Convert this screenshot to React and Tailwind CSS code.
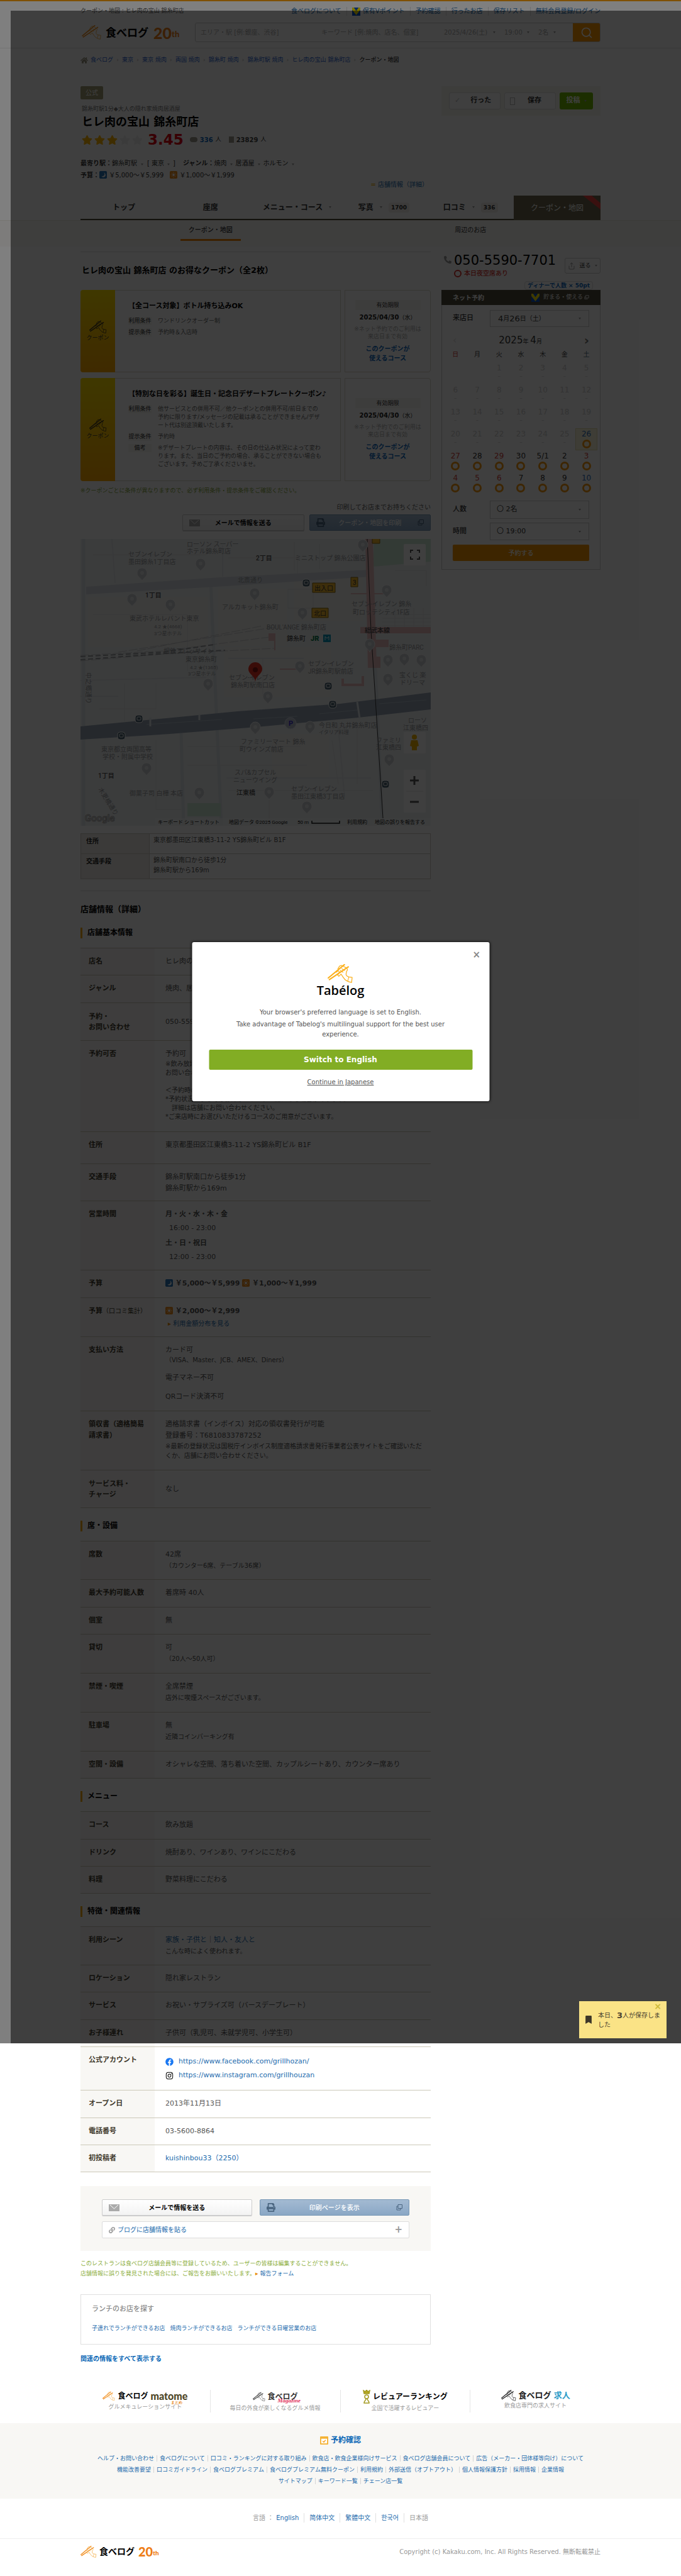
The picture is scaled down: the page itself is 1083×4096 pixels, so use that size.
import React from "react";
import { FaFacebook, FaInstagram, FaPhoneAlt, FaHome, FaBookmark, FaLink, FaPrint, FaStar } from "react-icons/fa";
import { FiSearch, FiShare } from "react-icons/fi";

const FONT = "font-['DejaVu_Sans','Noto_Sans_CJK_JP',sans-serif]";
const LINK = "text-[#1c6bad]";

function Hand({ className, stick = "#f08c1e", line = "#f4b04c" }) {
  return (
    <svg viewBox="0 0 46 34" className={className} fill="none" aria-hidden="true">
      <path d="M1 25 30 1M3 28 37 5" stroke={stick} strokeWidth="2.4" strokeLinecap="round" />
      <path d="m18 9 3-5c2-2 5-2 7 0l6 3c2 2 2 4 0 6l-1 5c0 3 2 4 5 5l6 1-1 9c-7-1-12-4-15-9l-4-6-4 4-2-2 3-6-2-2-4 3" stroke={line} strokeWidth="1.4" strokeLinejoin="round" />
      <path d="m38 23-2 8M22 11l6 4M25 8l6 4" stroke={line} strokeWidth="1.2" />
    </svg>
  );
}

function Logo({ small }) {
  return (
    <a href="#" className="flex items-center text-black" aria-label="食べログ">
      <Hand className={small ? "h-[19px] w-[26px]" : "h-[23px] w-[36px]"} />
      <span className={small ? "ml-1 text-[14px] font-bold leading-5" : "ml-1 text-[17px] font-bold leading-6"}>食べログ</span>
      <span className={small ? "ml-1.5 flex items-end font-['Lato'] font-black leading-5 text-[#ee7d16]" : "ml-2 flex items-end font-['Lato'] font-black leading-6 text-[#ee7d16]"}>
        <span className={small ? "text-[20px]" : "text-[25px]"}>20</span>
        <span className={small ? "text-[10px] leading-4" : "text-[13px] leading-5"}>th</span>
      </span>
    </a>
  );
}

function Caret() {
  return <span className="inline-block border-x-2 border-t-3 border-x-transparent border-t-[#999]" />;
}

function VMark() {
  return (
    <svg viewBox="0 0 14 14" className="size-[13px] shrink-0" aria-hidden="true">
      <path d="M0 0h14v14H0z" fill="#0a52c8" />
      <path d="M0 0h3l4 6 4-6h3v4l-7 9-7-9z" fill="#ffe900" />
    </svg>
  );
}

function Moon() {
  return (
    <svg viewBox="0 0 14 14" className="inline-block size-3 align-[-2px]" aria-hidden="true">
      <rect width="14" height="14" rx="2" fill="#2a77b8" />
      <path d="M8 2.5c3 2 2 7-4 7.500 3 3 8 1 7.500-3C11.200 4.500 10 3 8 2.500z" fill="#fff" />
    </svg>
  );
}

function Sun() {
  return (
    <svg viewBox="0 0 14 14" className="inline-block size-3 align-[-2px]" aria-hidden="true">
      <rect width="14" height="14" rx="2" fill="#ec8c1e" />
      <circle cx="7" cy="7" r="2.200" fill="#fff" />
      <path d="M7 2v1.500M7 10.500V12M2 7h1.500M10.500 7H12M3.500 3.500l1 1M9.500 9.500l1 1M3.500 10.500l1-1M9.500 4.500l1-1" stroke="#fff" />
    </svg>
  );
}

const Wrap = ({ className = "", children }) => <div className={"mx-auto w-full max-w-[827px] " + className}>{children}</div>;

function Header() {
  const nav = ["予約確認", "行ったお店", "保存リスト", "無料会員登録/ログイン"];
  return (
    <header className="border-t-2 border-b border-t-[#ffa000] border-b-[#e6e6e6] pb-[9px]">
      <Wrap>
        <div className="mt-[9px] flex h-3.5 items-center justify-between">
          <p className="text-[9px] text-[#555]">クーポン・地図 : ヒレ肉の宝山 錦糸町店</p>
          <nav className={"ml-auto flex shrink-0 items-center text-[10px] leading-3.5 " + LINK}>
            <a href="#" className="pr-2">食べログについて</a>
            <a href="#" className="flex items-center gap-1 border-l border-[#ddd] px-2"><VMark />保有Vポイント</a>
            {nav.map((t, i) => (
              <a key={t} href="#" className={i === 3 ? "border-l border-[#ddd] pl-2" : "border-l border-[#ddd] px-2"}>{t}</a>
            ))}
          </nav>
        </div>
        <div className="mt-[11px] flex h-[31px] items-center justify-between">
          <Logo />
          <form className="flex h-full w-[645px] items-stretch overflow-hidden rounded-[3px] border border-[#ccc] text-[10px] text-[#aaa]">
            <input aria-label="エリア・駅" placeholder="エリア・駅 [例:銀座、渋谷]" className="w-[192px] px-2 placeholder:text-[#aaa]" />
            <input aria-label="キーワード" placeholder="キーワード [例:焼肉、店名、個室]" className="w-[195px] px-2 placeholder:text-[#aaa]" />
            <span className="flex flex-1 items-center gap-1 pl-2">
              <select aria-label="日付" className="w-[74px] appearance-none"><option>2025/4/26(土)</option></select><Caret />
              <select aria-label="時刻" className="ml-2.5 w-[32px] appearance-none"><option>19:00</option></select><Caret />
              <select aria-label="人数検索" className="ml-2.5 w-[20px] appearance-none"><option>2名</option></select><Caret />
            </span>
            <button type="button" aria-label="検索" className="flex w-[43px] items-center justify-center bg-[#f90] text-white"><FiSearch className="size-5" /></button>
          </form>
        </div>
      </Wrap>
    </header>
  );
}

function Breadcrumb() {
  const items = ["食べログ", "東京", "東京 焼肉", "両国 焼肉", "錦糸町 焼肉", "錦糸町駅 焼肉", "ヒレ肉の宝山 錦糸町店"];
  return (
    <Wrap className="mt-3 flex h-3.5 items-center text-[9px] text-[#333]">
      <FaHome className="mr-1 size-3 text-[#999580]" />
      {items.map((t) => (
        <span key={t} className="flex items-center">
          <a href="#" className="text-[#1f5fd0]">{t}</a>
          <span className="w-3.5 text-center text-[#aaa]">›</span>
        </span>
      ))}
      <span className="font-medium">クーポン・地図</span>
    </Wrap>
  );
}

function ShopHead() {
  return (
    <Wrap className="mt-[34px] flex justify-between">
      <div>
        <span className="inline-flex h-[21px] items-center rounded-[2px] bg-[#a39e74] px-2 text-[10px] text-white">公式</span>
        <p className="mt-2 h-3.5 pl-0.5 text-[9px] leading-3.5 text-[#777]">錦糸町駅1分◆大人の隠れ家焼肉居酒屋</p>
        <h1 className="h-7 pl-0.5 text-[18px] font-bold leading-7 text-black">ヒレ肉の宝山 錦糸町店</h1>
        <div className="flex h-7 items-center pl-0.5">
          <div className="flex gap-[3px] text-[#ffb400]">
            <FaStar className="size-[17px]" /><FaStar className="size-[17px]" /><FaStar className="size-[17px]" />
            <FaStar className="size-[17px] text-[#eee]" /><FaStar className="size-[17px] text-[#eee]" />
          </div>
          <b className="ml-2 text-[23px] leading-7 text-[#e00010]">3.45</b>
          <span className="ml-2.5 h-2 w-3 rounded-full bg-[#9c998c]" />
          <b className="ml-1 text-[10px] text-[#0b66bd]">336</b><span className="ml-1 text-[9px]">人</span>
          <span className="ml-3 h-2.5 w-2 bg-[#9c998c]" />
          <b className="ml-1 text-[10px] text-[#444]">23829</b><span className="ml-1 text-[9px]">人</span>
        </div>
        <div className="mt-3.5 text-[10px] leading-[19px] text-[#333]">
          <p className="flex items-center"><b>最寄り駅：</b>錦糸町駅<i className="w-4 text-center"><Caret /></i>[ 東京<i className="w-3.5 text-center"><Caret /></i>]<b className="ml-3">ジャンル：</b>焼肉<i className="w-3.5 text-center"><Caret /></i>居酒屋<i className="w-3.5 text-center"><Caret /></i>ホルモン<i className="w-3.5 text-center"><Caret /></i></p>
          <p><b>予算：</b><Moon /> ￥5,000～￥5,999　<Sun /> ￥1,000～￥1,999</p>
        </div>
        <p className="h-3 w-[557px] pr-1 text-right text-[10px] leading-3"><a href="#" className={LINK}><span className="text-[#e8a800]">=</span> 店舗情報（詳細）</a></p>
      </div>
      <div className="flex h-[47px] w-[253px] items-center gap-1.5 bg-[#f5f4ef] px-3 text-[11px] font-bold text-[#333]">
        <button className="flex h-[27px] w-[82px] items-center gap-4 rounded-[3px] border border-[#ddd] bg-white pl-2"><span className="text-[#bbb]">✓</span>行った</button>
        <button className="flex h-[27px] w-[82px] items-center gap-5 rounded-[3px] border border-[#ddd] bg-white pl-2"><span className="h-3 w-2 border border-[#bbb]" />保存</button>
        <button className="flex h-[27px] flex-1 items-center justify-center gap-1.5 rounded-[3px] bg-[#72b800] text-white">投稿 <Caret /></button>
      </div>
    </Wrap>
  );
}

function Tabs() {
  return (
    <>
      <Wrap className="mt-[11px]">
        <nav className="grid h-[39px] grid-cols-6 items-stretch text-[12px] font-bold text-[#333]">
          {[["トップ"], ["座席"], ["メニュー・コース"], ["写真", "1700"], ["口コミ", "336"]].map(([t, n]) => (
            <a key={t} href="#" className="flex items-center justify-center gap-2.5 border-b-2 border-[#4a4733]">
              {t}
              {t === "メニュー・コース" || n ? <Caret /> : null}
              {n ? <span className="rounded-sm bg-[#f1efea] px-1 text-[9px] leading-4">{n}</span> : null}
            </a>
          ))}
          <a href="#" className="relative flex items-center justify-center overflow-hidden bg-[#6c674c] font-normal text-white">
            クーポン・地図
            <svg viewBox="0 0 28 22" className="absolute right-0 top-0 h-[22px] w-7" aria-hidden="true"><path d="M0 0h14l14 12v10z" fill="#e8413c" /></svg>
          </a>
        </nav>
      </Wrap>
      <div className="border-t border-[#eceae3] bg-[#faf9f7]">
        <Wrap className="grid h-[41px] grid-cols-2 text-[10px] text-[#333]">
          <a href="#" className="mx-auto h-[32px] w-24 border-b-3 border-[#f08300] text-center font-medium leading-[30px]">クーポン・地図</a>
          <a href="#" className="text-center leading-[30px]">周辺のお店</a>
        </Wrap>
      </div>
    </>
  );
}

function Coupon({ title, rows, size }) {
  return (
    <article className={"flex " + size}>
      <div className="flex w-[55px] flex-col items-center justify-center rounded-l-sm bg-linear-to-b from-[#ffe000] to-[#ffa800] text-[9px] text-[#333]">
        <Hand className="h-[22px] w-[28px]" stick="#443a20" line="#443a20" />
        クーポン
      </div>
      <div className="flex-1 border border-l-0 border-[#d8d5c8] pl-[21px] pt-4">
        <h3 className="text-[11px] font-bold leading-[18px] text-black">{title}</h3>
        <dl className="mt-2 text-[9px] leading-[13px]">
          {rows.map(([k, lines]) => (
            <div key={k} className="mb-[5px] flex gap-2.5">
              <dt className="h-[13px] w-[37px] bg-[#f5f4f0] text-center text-[#333]">{k}</dt>
              <dd className="flex-1 text-[#666]">{lines.map((l) => <span key={l} className="block">{l}</span>)}</dd>
            </div>
          ))}
        </dl>
      </div>
      <div className="ml-1.5 flex w-[137px] flex-col items-center justify-center rounded-r-sm border border-[#d8d5c8] text-[9px]">
        <span className="w-[104px] bg-[#f7f6f2] text-center leading-4 text-[#333]">有効期限</span>
        <p className="mt-1 leading-4 text-[#222]"><b className="text-[10px]">2025/04/30</b>（水）</p>
        <p className="mt-1 text-center leading-3 text-[#aaa]">※ネット予約でのご利用は<br />来店日まで有効</p>
        <a href="#" className="mt-1.5 text-center text-[10px] font-bold leading-[15px] text-[#0b66bd]">このクーポンが<br />使えるコース</a>
      </div>
    </article>
  );
}

const mapLabels = [
  [169, 8, "ローソン スーパー"], [169, 19, "ホテル錦糸町店"], [76, 24, "セブンイレブン"], [76, 36, "墨田錦糸1丁目店"],
  [341, 30, "ミニストップ 錦糸公園店"], [250, 65, "北斎通り"], [225, 108, "アルカキット錦糸町"],
  [431, 103, "セブン-イレブン 錦糸"], [433, 116, "町ロッテシティ1F店"], [78, 126, "東武ホテルレバント東京"],
  [117, 138, "4.2 ★(4668)", 8], [117, 149, "3つ星ホテル", 8], [296, 140, "BOUL'ANGE 錦糸町店"],
  [132, 178, "相鉄フレッサイン"], [167, 191, "東京錦糸町"], [174, 203, "4.2 ★(1365)", 8], [171, 213, "3つ星ホテル", 8],
  [491, 172, "錦糸町PARC"], [362, 198, "セブン-イレブン"], [362, 210, "JR錦糸町駅前店"],
  [236, 220, "セブン-イレブン"], [239, 232, "錦糸町駅南口店"], [507, 216, "宝くじ 楽"], [508, 228, "ドリーマ"],
  [521, 288, "ローソ"], [513, 300, "江東橋四"], [379, 296, "今日和 丸井錦糸町店"], [379, 306, "イタリア料理", 8],
  [255, 322, "ファミリーマート 錦糸"], [253, 334, "町ウインズ前店"], [470, 320, "ファミリ"], [470, 331, "江東橋四"],
  [33, 334, "東京都立両国高等"], [35, 346, "学校・附属中学校"], [245, 371, "スパ&カプセル"], [243, 383, "ニューウイング"],
  [78, 404, "御菓子司 白樺 本店"], [335, 397, "セブン-イレブン"], [335, 409, "墨田江東橋3丁目店"],
];
const mapDark = [[279, 30, "2丁目"], [103, 89, "1丁目"], [28, 376, "1丁目"], [248, 403, "江東橋"], [452, 145, "総武本線"], [328, 158, "錦糸町"]];
const mapPins = [[98, 55], [191, 40], [82, 96], [143, 105], [277, 87], [353, 118], [487, 82], [449, 10], [460, 168], [349, 203], [203, 231], [298, 251], [489, 193], [515, 191], [542, 193], [489, 223], [278, 300], [365, 299], [105, 365], [491, 351], [189, 404], [300, 403], [360, 426]];
const mapStops = [[359, 70], [394, 234], [401, 263], [93, 286], [65, 313], [485, 390]];

function MapView() {
  return (
    <svg viewBox="0 0 557 456" role="img" aria-label="錦糸町駅周辺の地図" className="mt-[13px] block w-full font-['Roboto','Noto_Sans_CJK_JP',sans-serif]">
      <rect width="557" height="456" fill="#eff0f1" />
      <g fill="#f3f0ed"><path d="M12 92h190v80H12zM218 80h110v90H218zM228 172h170v80H228zM305 310h90v70H305zM340 60h110v70H340z" /></g>
      <g fill="none" stroke="#dfe4e8" strokeWidth="5"><path d="M5 0v456M207 67l17 389M160 308l4 148M460 0l20 456" /></g>
      <g fill="none" stroke="#e2e6e9" strokeWidth="2"><path d="M0 225l200-5M226 10v50M50 0l5 70M232 380h230M0 250h60M235 190h120M410 300l10 110" /></g>
      <g fill="none" stroke="#e0e3e5" strokeWidth="1"><path d="M20 25h180M20 120h150v90M70 230v60M30 270h90v-40M235 30h110v30M340 5v45M380 8v40M170 330h180M170 360h190M235 400h230M290 250v-60M300 410v40M120 320v110h40M440 300v90M400 320l10 70M480 120h77M480 126h77M480 132h77M480 138h77M500 110v30M515 110v30M530 110v30M545 110v30M330 80h40v30h-40zM500 50h50v25" /></g>
      <path d="M467 0h90v36l-92 8z" fill="#cfe8d6" /><path d="M170 420h53v21h-53z" fill="#cfe8d6" />
      <path d="M9 76 222 61l238-12v11L215 76 9 88z" fill="#d4dae0" />
      <g fill="none" stroke="#c8cbcd" strokeWidth="1"><path d="m0 185 132-7 176-23M0 194l132-11 176-9M60 180l250-40M90 178l200-40" strokeDasharray="14 3" /></g>
      <path d="m0 187 132-7 80-12M0 192l150-11 80-4" stroke="#9b9ea1" strokeWidth="2" strokeDasharray="8 4" fill="none" />
      <g fill="#e8bcbe"><path d="M453 0h12l6 203h-14zM445 140h112v10H445zM299 150h9v12h-9zM308 150h2v27h-2zM460 160h30v12h-30zM457 187h20v18h-20zM317 206h32v2h-32zM430 86h57v2h-57zM415 222h4v8h28v-12h4v16h-36z" /></g>
      <path d="m0 298 250-24 163-12 144-18v27l-115 13-162 15-138 11-142 9z" fill="#94a3b3" />
      <path d="m105 295 120-8M275 286l70-4M380 278l60-6M475 262l75-6" stroke="#b3bfca" fill="none" />
      <path d="M111 284v14M189 279v9M440 259l4 26" stroke="#dfe4e8" strokeWidth="3" />
      <path d="m456 0 6 146 6 93 13 205" fill="none" stroke="#333" strokeWidth="1" />
      {mapPins.map(([x, y]) => (
        <g key={x + "-" + y}><path d={`M${x} ${y + 12}c-1-5-8-6-8-13a8 8 0 0 1 16 0c0 7-7 8-8 13z`} fill="#c9cdd1" stroke="#f6f6f6" /><circle cx={x} cy={y - 1} r="3" fill="#e3e5e7" /></g>
      ))}
      <g fill="#989c9f">
        {mapLabels.map(([x, y, t, s]) => <text key={x + "-" + y} x={x} y={y + 4} fontSize={s || 10}>{t}</text>)}
        <text x="0" y="0" fontSize="10" transform="translate(9 212) rotate(90)">中之郷通り</text>
        <text x="0" y="0" fontSize="10" transform="translate(28 398) rotate(58)">木更橋通り</text>
      </g>
      <g fill="#4a4a4a">{mapDark.map(([x, y, t]) => <text key={x + "-" + y} x={x} y={y + 4} fontSize="10" fontWeight="500">{t}</text>)}</g>
      <text x="366" y="162" fontSize="11" fontWeight="900" fill="#0a7a4a">JR</text>
      <rect x="386" y="152" width="12" height="12" fill="#0097b8" /><path d="M389 161v-6l3 3 3-3v6" stroke="#fff" fill="none" />
      {mapStops.map(([x, y]) => (
        <g key={x + "-" + y}><rect x={x - 6} y={y - 6} width="12" height="12" rx="4" fill="#4a6272" stroke="#fff" /><rect x={x - 3} y={y - 3} width="6" height="5" rx="1" fill="none" stroke="#fff" /></g>
      ))}
      <g stroke="#8a6a10" fill="#f5b92c"><path d="M369 70h36v15h-36zM368 110h26v15h-26zM430 61h11v15h-11zM464-1h12v8h-12z" /></g>
      <g fill="#333" fontSize="10"><text x="372" y="82">出入口</text><text x="371" y="122">北口</text><text x="433" y="73">3</text></g>
      <circle cx="334" cy="293" r="9" fill="#b4bcc8" stroke="#dde" /><text x="331" y="297" fontSize="11" fontWeight="700" fill="#3a2ad0">P</text>
      <path d="M278 227c-1-10-11-12-11-20a11 11 0 0 1 22 0c0 8-10 10-11 20z" fill="#ea3323" /><circle cx="278" cy="208" r="4" fill="#8a1610" />
      <g fill="#fff"><rect x="514" y="8" width="35" height="34" rx="2" /><rect x="514" y="307" width="35" height="34" rx="2" /><rect x="514" y="367" width="35" height="68" rx="2" /></g>
      <path d="M525 22v-4h4M535 18h4v4M539 28v4h-4M529 32h-4v-4" stroke="#555" strokeWidth="2" fill="none" />
      <circle cx="531" cy="315" r="4" fill="#f5b400" /><path d="M526 320h10l2 9-3 1v6h-8v-6l-3-1z" fill="#f5b400" />
      <path d="M524 384h14M531 377v14M524 418h14" stroke="#555" strokeWidth="3" /><path d="M518 401h27" stroke="#e0e0e0" />
      <text x="7" y="449" fontSize="15" fontWeight="500" fill="#f8f8f8" stroke="#aaa" strokeWidth="1">Google</text>
      <rect x="119" y="444" width="438" height="12" fill="#f5f5f5" opacity="0.7" />
      <g fill="#111" fontSize="8"><text x="123" y="453">キーボード ショートカット</text><text x="236" y="453">地図データ ©2025 Google</text><text x="345" y="453">50 m</text><text x="424" y="453">利用規約</text><text x="468" y="453">地図の誤りを報告する</text></g>
      <path d="M368 448v4h44v-4" stroke="#111" fill="none" strokeWidth="1.500" />
    </svg>
  );
}

function ActionButtons({ print }) {
  return (
    <>
      <button className="relative flex h-[26px] flex-1 items-center justify-center rounded-[2px] border border-[#ccc] bg-linear-to-b from-white to-[#f3f3f3] text-[10px] font-bold text-black shadow-[0_1px_0_#ccc]">
        <svg viewBox="0 0 17 11" className="absolute left-2.5 h-[11px] w-[17px]" aria-hidden="true"><path d="M0 0h17v11H0z" fill="#aaa" /><path d="m2 1 6.500 6L15 1" stroke="#fff" fill="none" /></svg>
        メールで情報を送る
      </button>
      <button className="relative flex h-[26px] flex-1 items-center justify-center rounded-[2px] border border-[#7797b5] bg-linear-to-b from-[#a3bad2] to-[#8aa7c5] text-[10px] font-medium text-white">
        <FaPrint className="absolute left-2.5 size-3.5 text-[#4a6580]" />
        {print}
        <svg viewBox="0 0 10 10" className="absolute right-2.5 size-2.5" fill="none" stroke="#4a6580" aria-hidden="true"><path d="M3 .5h6.500v6H3zM3 3H1v6h6V7" /></svg>
      </button>
    </>
  );
}

const Sub = ({ children, className = "" }) => <span className={"block text-[10px] " + className}>{children}</span>;
const A = ({ children }) => <a href="#" className={LINK}>{children}</a>;

const sections = [
  ["店舗基本情報", [
    ["h-[43px]", "店名", "ヒレ肉の宝山 錦糸町店"],
    ["h-[44px]", "ジャンル", "焼肉、居酒屋、ホルモン"],
    ["h-[60px]", <>予約・<br />お問い合わせ</>, "050-5590-7701", true],
    ["h-[145px]", "予約可否", <>予約可<Sub className="leading-3.5">※飲み放題付きコースのご予約は、前日までに店舗へ直接<br />お問い合わせください。<br /><br />＜予約時のご注意＞<br />*予約状況によってはお席がカウンター席になる場合があります。<br />　詳細は店舗にお問い合わせください。<br />*ご来店時にお選びいただけるコースのご用意がございます。</Sub></>],
    ["h-[51px]", "住所", "東京都墨田区江東橋3-11-2 YS錦糸町ビル B1F"],
    ["h-[59px]", "交通手段", <>錦糸町駅南口から徒歩1分<br />錦糸町駅から169m</>],
    ["h-[110px]", "営業時間", <><b className="block">月・火・水・木・金</b><span className="mt-1 block pl-1.5">16:00 - 23:00</span><b className="mt-1.5 block">土・日・祝日</b><span className="mt-1 block pl-1.5">12:00 - 23:00</span></>],
    ["h-[44px]", "予算", <b><Moon /> ￥5,000～￥5,999 <Sun /> ￥1,000～￥1,999</b>],
    ["h-[62px]", <>予算<span className="font-normal text-[10px]">（口コミ集計）</span></>, <><b><Sun /> ￥2,000～￥2,999</b><Sub className="mt-0.5 pl-1"><span className="text-[#e88a00]">▸</span> <A>利用金額分布を見る</A></Sub></>],
    ["h-[118px]", "支払い方法", <>カード可<Sub className="leading-3.5">（VISA、Master、JCB、AMEX、Diners）</Sub><span className="mt-3 block">電子マネー不可</span><span className="mt-3 block">QRコード決済不可</span></>],
    ["h-[94px]", <>領収書（適格簡易<br />請求書）</>, <>適格請求書（インボイス）対応の領収書発行が可能<br />登録番号：T6810833787252<Sub className="leading-[15px]">※最新の登録状況は国税庁インボイス制度適格請求書発行事業者公表サイトをご確認いただ<br />くか、店舗にお問い合わせください。</Sub></>],
    ["h-[60px]", <>サービス料・<br />チャージ</>, "なし", true],
  ]],
  ["席・設備", [
    ["h-[61px]", "席数", <>42席<Sub>（カウンター6席、テーブル36席）</Sub></>],
    ["h-[44px]", "最大予約可能人数", "着席時 40人"],
    ["h-[43px]", "個室", "無"],
    ["h-[62px]", "貸切", <>可<Sub>（20人～50人可）</Sub></>],
    ["h-[62px]", "禁煙・喫煙", <>全席禁煙<Sub>店外に喫煙スペースがございます。</Sub></>],
    ["h-[62px]", "駐車場", <>無<Sub>近隣コインパーキング有</Sub></>],
    ["h-[43px]", "空間・設備", "オシャレな空間、落ち着いた空間、カップルシートあり、カウンター席あり"],
  ]],
  ["メニュー", [
    ["h-[44px]", "コース", "飲み放題"],
    ["h-[43px]", "ドリンク", "焼酎あり、ワインあり、ワインにこだわる"],
    ["h-[43px]", "料理", "野菜料理にこだわる"],
  ]],
  ["特徴・関連情報", [
    ["h-[61px]", "利用シーン", <><A>家族・子供と</A>｜<A>知人・友人と</A><Sub>こんな時によく使われます。</Sub></>],
    ["h-[43px]", "ロケーション", "隠れ家レストラン"],
    ["h-[44px]", "サービス", "お祝い・サプライズ可（バースデープレート）"],
    ["h-[43px]", "お子様連れ", "子供可（乳児可、未就学児可、小学生可）"],
    ["h-[69px]", "公式アカウント", <><span className="mt-0.5 flex items-center gap-2"><FaFacebook className="size-[13px] text-[#1877f2]" /><A>https://www.facebook.com/grillhozan/</A></span><span className="mt-1 flex items-center gap-2"><FaInstagram className="size-[13px] text-black" /><A>https://www.instagram.com/grillhouzan</A></span></>],
    ["h-[44px]", "オープン日", "2013年11月13日"],
    ["h-[43px]", "電話番号", "03-5600-8864"],
    ["h-[43px]", "初投稿者", <A>kuishinbou33（2250）</A>],
  ]],
];

function DetailSection({ title, rows }) {
  return (
    <section>
      <div className="h-[52px] pt-[20px]"><h3 className="h-[17px] border-l-3 border-[#f5a800] pl-2 text-[12px] font-bold leading-[17px] text-black">{title}</h3></div>
      <table className="w-full border-separate border-spacing-0 border-t border-[#ccc9b8] text-[11px] leading-[18px] text-[#555]">
        <tbody>
          {rows.map(([h, k, v, mid], i) => (
            <tr key={i} className={h}>
              <th className={"w-[118px] border-b border-[#ccc9b8] bg-[#f8f7f4] bg-clip-padding pl-[13px] pr-1 text-left font-bold text-[#40392c] " + (mid ? "align-middle leading-[17px]" : "pt-3 align-top")}>{k}</th>
              <td className={"border-b border-[#ccc9b8] pl-[17px] pr-1 " + (mid ? "align-middle" : "pt-3 align-top")}>{v}</td>
            </tr>
          ))}
        </tbody>
      </table>
    </section>
  );
}

function MainColumn() {
  return (
    <div className="min-w-0 flex-1 border-t border-[#ddd]">
      <h2 className="mt-5 pl-0.5 text-[13px] font-bold leading-[18px] text-black">ヒレ肉の宝山 錦糸町店 のお得なクーポン（全2枚）</h2>
      <div className="mt-[22px] flex flex-col gap-[9px]">
        <Coupon size="min-h-[131px]" title="【全コース対象】ボトル持ち込みOK" rows={[["利用条件", ["ワンドリンクオーダー制"]], ["提示条件", ["予約時＆入店時"]]]} />
        <Coupon size="min-h-[164px]" title="【特別な日を彩る】誕生日・記念日デザートプレートクーポン♪" rows={[
          ["利用条件", ["他サービスとの併用不可／他クーポンとの併用不可/前日までの", "予約に限ります/メッセージの記載は承ることができません/デザ", "ート代は別途頂戴いたします。"]],
          ["提示条件", ["予約時"]],
          ["備考", ["※デザートプレートの内容は、その日の仕込み状況によって変わ", "ります。また、当日のご予約の場合、承ることができない場合も", "ございます。予めご了承くださいませ。"]],
        ]} />
      </div>
      <p className="mt-2 text-[9px] leading-3.5 text-[#84a63c]">※クーポンごとに条件が異なりますので、必ず利用条件・提示条件をご確認ください。</p>
      <p className="mt-[13px] text-right text-[10px] leading-3.5 text-[#666]">印刷してお店までお持ちください</p>
      <div className="ml-auto mt-1 flex w-[395px] gap-2"><ActionButtons print="クーポン・地図を印刷" /></div>
      <MapView />
      <table className="mt-3 w-full border-separate border-spacing-0 border-l border-t border-[#ccc9c0] text-[10px] leading-4 text-[#555]">
        <tbody>
          {[["h-8", "住所", "東京都墨田区江東橋3-11-2 YS錦糸町ビル B1F"], ["h-10", "交通手段", <>錦糸町駅南口から徒歩1分<br />錦糸町駅から169m</>]].map(([h, k, v]) => (
            <tr key={k} className={h}>
              <th className="w-[109px] border-b border-r border-[#ccc9c0] bg-[#efebe5] pl-2 pt-1 text-left align-top font-bold text-[#222]">{k}</th>
              <td className="border-b border-r border-[#ccc9c0] pl-1.5 pt-0.5 align-top">{v}</td>
            </tr>
          ))}
        </tbody>
      </table>
      <h2 className="mt-[18px] border-t border-[#ddd] pt-5 text-[13px] font-bold leading-[18px] text-black">店舗情報（詳細）</h2>
      {sections.map(([t, rows]) => <DetailSection key={t} title={t} rows={rows} />)}
      <div className="mt-[22px] bg-[#f8f7f4] px-[34px] pb-5 pt-[21px]">
        <div className="flex gap-3"><ActionButtons print="印刷ページを表示" /></div>
        <button className="mt-[9px] flex h-[27px] w-full items-center gap-1 rounded-[2px] border border-[#ddd] bg-white px-2.5 text-[10px]">
          <FaLink className="size-2.5 text-[#999]" /><span className={LINK}>ブログに店舗情報を貼る</span><span className="ml-auto text-[15px] font-bold text-[#999]">+</span>
        </button>
      </div>
      <p className="mt-3 text-[9px] leading-4 text-[#8cae3c]">このレストランは食べログ店舗会員等に登録しているため、ユーザーの皆様は編集することができません。<br />店舗情報に誤りを発見された場合には、ご報告をお願いいたします。<span className="text-[#e88a00]">▸</span> <A>報告フォーム</A></p>
      <section className="mt-[25px] border border-[#e0e0e0] px-[17px] pb-[16px] pt-[14px]">
        <h3 className="text-[11px] font-medium leading-[18px] text-[#888]">ランチのお店を探す</h3>
        <p className="mt-3 flex gap-2 text-[9px] leading-[18px]">
          <A>子連れでランチができるお店</A><A>焼肉ランチができるお店</A><A>ランチができる日曜営業のお店</A>
        </p>
      </section>
      <a href="#" className="mt-3.5 block text-[10px] font-bold leading-[18px] text-[#0564b4]">関連の情報をすべて表示する</a>
    </div>
  );
}

const Ring = () => <span className="mx-auto block size-[14px] rounded-full border-[3px] border-[#f59a10]" />;

function Sidebar() {
  const days = ["日", "月", "火", "水", "木", "金", "土"];
  const weeks = [["", "", "1", "2", "3", "4", "5"], ["6", "7", "8", "9", "10", "11", "12"], ["13", "14", "15", "16", "17", "18", "19"], ["20", "21", "22", "23", "24", "25", "26"], ["27", "28", "29", "30", "5/1", "2", "3"], ["4", "5", "6", "7", "8", "9", "10"]];
  const red = ["4-0", "4-2", "4-6", "5-0", "5-1", "5-2"];
  const blue = ["3-6", "5-6"];
  return (
    <aside className="w-[253px] shrink-0">
      <div className="flex h-[61px] items-start pt-[3px]">
        <FaPhoneAlt className="ml-1 mr-1 mt-1 size-3 text-[#999]" />
        <div>
          <p className="text-[21px] leading-[22px] text-black">050-5590-7701</p>
          <p className="mt-0.5 flex items-center gap-1 text-[10px] font-medium leading-4 text-[#d8322c]"><span className="size-3 rounded-full border-2 border-[#d8322c]" />本日夜空席あり</p>
        </div>
        <button className="ml-auto mt-[7px] flex h-[25px] w-[57px] items-center justify-center gap-1.5 rounded-[3px] border border-[#ccc] text-[9px] text-[#333]"><FiShare className="size-3 text-[#999]" />送る<Caret /></button>
      </div>
      <div className="relative flex h-6 items-center justify-between bg-[#4e4a3a] px-[18px] text-[10px] text-white">
        <b>ネット予約</b>
        <a href="#" className="flex items-center gap-1.5 text-[9px]"><VMark />貯まる・使える<svg viewBox="0 0 10 10" className="-ml-1 size-2" fill="none" stroke="#fff" aria-hidden="true"><path d="M3 1h6v5H3zM1 3v5h6" /></svg></a>
        <span className="absolute -top-3.5 right-3 rounded-sm border border-[#ddd] bg-white px-1 text-[9px] font-bold leading-3 text-[#0b66bd]">ディナーで人数 × 50pt</span>
      </div>
      <form className="border-x border-b border-[#ccc] px-[17px] pb-[13px] pt-2 text-[11px] text-[#333]">
        <div className="flex items-center">
          <label htmlFor="date" className="w-[59px] font-medium">来店日</label>
          <button id="date" type="button" className="flex h-[27px] flex-1 items-center border border-[#ccc] px-3 text-[10px]"><span className="text-[13px]">4</span>月<span className="text-[13px]">26</span>日（土）<span className="ml-auto flex"><Caret /></span></button>
        </div>
        <div className="mt-[11px] flex h-5 items-center justify-between text-[9px]">
          <button type="button" aria-label="前の月" className="text-[16px] text-[#ddd]">‹</button>
          <span><span className="text-[15px]">2025</span>年 <span className="text-[15px]">4</span>月</span>
          <button type="button" aria-label="次の月" className="text-[20px] font-bold leading-5 text-[#777]">›</button>
        </div>
        <div className="-mx-[13px] mt-1.5">
          <table className="w-full table-fixed border-collapse text-center text-[12px]">
            <thead><tr className="h-[19px]">{days.map((d, i) => <th key={d} className={"align-top text-[10px] font-normal leading-3.5 " + (i === 0 ? "text-[#d04038]" : i === 6 ? "text-[#4a6a80]" : "text-[#444]")}>{d}</th>)}</tr></thead>
            <tbody>
              {weeks.map((w, r) => (
                <tr key={r} className="h-[35px]">
                  {w.map((d, c) => {
                    const id = r + "-" + c;
                    const open = r > 3 || id === "3-6";
                    const color = red.includes(id) ? "text-[#d04038]" : blue.includes(id) ? "text-[#2a6ab8]" : open ? "text-[#333]" : "text-[#ccc]";
                    return (
                      <td key={c} className={"p-0 align-top leading-[18px] " + color + (id === "3-6" ? " bg-[#fbf5d8] outline-1 -outline-offset-1 outline-[#e5dca8]" : "")}>
                        {d}
                        {open ? <Ring /> : <span className="block text-[9px] leading-2">{d ? "–" : ""}</span>}
                      </td>
                    );
                  })}
                </tr>
              ))}
            </tbody>
          </table>
        </div>
        <div className="mt-[10px] flex items-center">
          <label htmlFor="party" className="w-[59px] font-medium">人数</label>
          <div className="flex h-[29px] flex-1 items-center border border-[#ccc] pl-2.5 pr-3"><select id="party" className="flex-1 appearance-none text-[11px]"><option>〇 2名</option></select><Caret /></div>
        </div>
        <div className="mt-1.5 flex items-center">
          <label htmlFor="time" className="w-[59px] font-medium">時間</label>
          <div className="flex h-7 flex-1 items-center border border-[#ccc] pl-2.5 pr-3"><select id="time" className="flex-1 appearance-none text-[11px]"><option>〇 19:00</option></select><Caret /></div>
        </div>
        <button type="button" className="mt-[7px] h-[26px] w-full rounded-[2px] bg-[#f59600] text-[10px] font-medium text-white">予約する</button>
      </form>
    </aside>
  );
}

function Rows({ items }) {
  return (
    <div className="flex justify-center divide-x divide-[#d5d5d5]">
      {items.map((t) => <a key={t} href="#" className="my-1 px-1 leading-2.5">{t}</a>)}
    </div>
  );
}

function Footer() {
  return (
    <footer>
      <Wrap className="mt-10 grid h-[35px] grid-cols-4 divide-x divide-[#e5e5e5] text-center text-[9px] text-[#999]">
        <div>
          <div className="flex h-5 items-center justify-center gap-1 text-[12px] font-bold leading-5 text-black"><Hand className="h-4 w-5" />食べログ<span className="relative font-['Lato'] text-[16px] font-black text-[#4d4526]">matome<span className="absolute right-2 top-4 text-[6px] leading-2 text-[#e88a1e]">まとめ</span></span></div>
          <p className="leading-3.5">グルメキュレーションサイト</p>
        </div>
        <div>
          <div className="flex h-[22px] items-center justify-center gap-1 text-[12px] font-bold leading-5 text-[#333]"><Hand className="h-[18px] w-5" stick="#444" line="#555" /><span className="relative">食べログ<span className="absolute left-4 top-2.5 font-['Liberation_Serif'] text-[9px] italic leading-3 text-[#e0305a]">Magazine</span></span></div>
          <p className="leading-3.5">毎日の外食が楽しくなるグルメ情報</p>
        </div>
        <div>
          <div className="flex h-[22px] items-center justify-center gap-1 text-[12px] font-bold leading-5 text-black">
            <svg viewBox="0 0 12 22" className="h-[22px] w-3" fill="none" stroke="#a39a20" strokeWidth="1.500" aria-hidden="true"><path d="M2 6 1 1l3 2 2-3 2 3 3-2-1 5z" fill="#b8a820" /><circle cx="6" cy="11" r="3" /><path d="M5 14c0 3-3 3-3 7h8c0-4-3-4-3-7" /></svg>
            レビュアーランキング
          </div>
          <p className="leading-3.5">全国で活躍するレビュアー</p>
        </div>
        <div>
          <div className="flex h-[18px] items-center justify-center gap-1 text-[13px] font-bold leading-5 text-[#222]"><Hand className="h-[18px] w-6" stick="#222" line="#333" />食べログ<span className="text-[#2d9cc8]">求人</span></div>
          <p className="leading-3.5">飲食店専門の求人サイト</p>
        </div>
      </Wrap>
      <div className={"mt-[18px] bg-[#f8f7f4] pb-[19px] pt-[18px] text-[9px] " + LINK}>
        <a href="#" className="flex h-[18px] items-center justify-center gap-1 text-[12px] font-bold text-[#0564b4]">
          <svg viewBox="0 0 14 14" className="size-[13px]" aria-hidden="true"><rect width="14" height="14" rx="1" fill="#f5b335" /><path d="M2 4h10v8H2z" fill="#fff" /><path d="m4.500 8 2 2 3-4" stroke="#f5a020" strokeWidth="1.500" fill="none" /></svg>
          予約確認
        </a>
        <div className="mt-[11px]">
          <Rows items={["ヘルプ・お問い合わせ", "食べログについて", "口コミ・ランキングに対する取り組み", "飲食店・飲食企業様向けサービス", "食べログ店舗会員について", "広告（メーカー・団体様等向け）について"]} />
          <Rows items={["機能改善要望", "口コミガイドライン", "食べログプレミアム", "食べログプレミアム無料クーポン", "利用規約", "外部送信（オプトアウト）", "個人情報保護方針", "採用情報", "企業情報"]} />
          <Rows items={["サイトマップ", "キーワード一覧", "チェーン店一覧"]} />
        </div>
      </div>
      <div className="mt-5 flex h-5 items-center justify-center text-[10px] text-[#999]">
        <span>言語 ：</span>
        <div className="flex divide-x divide-[#e0e0e0]">
          {["English", "简体中文", "繁體中文", "한국어"].map((t) => <a key={t} href="#" className={"px-2 font-['DejaVu_Sans','Noto_Sans_CJK_SC','Noto_Sans_CJK_KR',sans-serif] first:pl-1 " + LINK}>{t}</a>)}
          <span className="pl-2">日本語</span>
        </div>
      </div>
      <div className="mt-[23px] border-t border-[#eee] pb-[31px] pt-[9px]">
        <Wrap className="flex h-[22px] items-center justify-between text-[10px] text-[#999]"><Logo small /><span>Copyright (c) Kakaku.com, Inc. All Rights Reserved. 無断転載禁止</span></Wrap>
      </div>
    </footer>
  );
}

function LanguageDialog() {
  return (
    <div role="dialog" aria-label="Language" className="absolute left-1/2 top-[1498px] flex h-[253px] w-[473px] -translate-x-1/2 flex-col items-center rounded-[3px] bg-white px-[27px] text-center text-[10px] text-[#555] shadow-[0_0_4px_#000]">
      <button aria-label="Close" className="absolute right-3.5 top-3 text-[15px] font-bold leading-4 text-[#888]">×</button>
      <Hand className="mt-[35px] h-[30px] w-[48px]" stick="#fbb01c" line="#fbb01c" />
      <span className="font-['Open_Sans'] text-[20px] font-semibold leading-6 text-black">Tabélog</span>
      <p className="mt-[15px] leading-4">Your browser's preferred language is set to English.</p>
      <p className="mt-[3px] w-[390px] leading-4">Take advantage of Tabelog's multilingual support for the best user experience.</p>
      <button className="mt-4 h-8 w-full rounded-[2px] bg-[#82ad24] text-[12px] font-bold text-white">Switch to English</button>
      <a href="#" className="mt-3 leading-4 underline">Continue in Japanese</a>
    </div>
  );
}

function SavedToast() {
  return (
    <div className="absolute right-[23px] top-[3182px] h-[59px] w-[139px] bg-[#fae386] pl-2.5 text-[10px] leading-[15px] text-[#4a4230]">
      <button aria-label="閉じる" className="ml-auto mr-2 block h-3.5 text-[14px] font-bold leading-4 text-[#cdb93a]">×</button>
      <div className="flex items-center gap-2.5">
        <FaBookmark className="h-[13px] w-[10px] shrink-0 text-[#3d3628]" />
        <p>
          <span className="flex h-4 items-center">本日、<b className="text-[13px]">3</b>人が保存しま</span>
          <span className="block">した</span>
        </p>
      </div>
    </div>
  );
}

export default function App() {
  return (
    <div className={"relative overflow-hidden bg-white text-[10px] text-[#333] " + FONT}>
      <Header />
      <Breadcrumb />
      <ShopHead />
      <Tabs />
      <Wrap className="mt-2 flex items-start gap-[17px]">
        <MainColumn />
        <Sidebar />
      </Wrap>
      <Footer />
      <div className="absolute inset-x-0 top-0 h-[3249px] bg-black/50" />
      <div className="absolute left-[17px] right-0 top-[17px] h-[3232px] bg-black/50" />
      <LanguageDialog />
      <SavedToast />
    </div>
  );
}
